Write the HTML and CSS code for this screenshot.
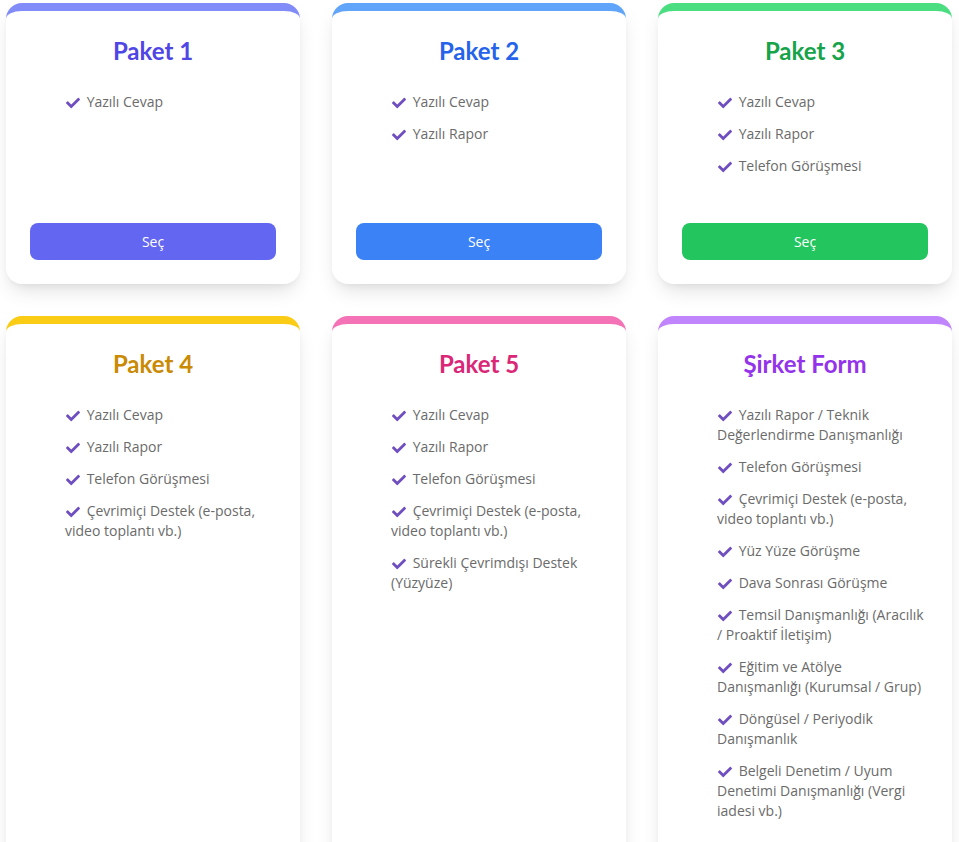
FILE: index.html
```html
<!DOCTYPE html>
<html lang="tr">
<head>
    <meta charset="UTF-8">
    <meta name="viewport" content="width=device-width, initial-scale=1.0">
    <title>Paketler</title>
    <link rel="stylesheet" href="styles.css">
</head>
<body>

    <div class="packages">

        <!-- Paket 1 -->
        <div class="card indigo">
            <h2>Paket 1</h2>
            <ul>
                <li><svg class="check" viewBox="0 0 512 512"><path d="M173.9 439.4l-166.4-166.4c-10-10-10-26.2 0-36.2l36.2-36.2c10-10 26.2-10 36.2 0L192 312.7 432.1 72.6c10-10 26.2-10 36.2 0l36.2 36.2c10 10 10 26.2 0 36.2l-294.4 294.4c-10 10-26.2 10-36.2 0z"/></svg> Yazılı Cevap</li>
            </ul>
            <button>Seç</button>
        </div>

        <!-- Paket 2 -->
        <div class="card blue">
            <h2>Paket 2</h2>
            <ul>
                <li><svg class="check" viewBox="0 0 512 512"><path d="M173.9 439.4l-166.4-166.4c-10-10-10-26.2 0-36.2l36.2-36.2c10-10 26.2-10 36.2 0L192 312.7 432.1 72.6c10-10 26.2-10 36.2 0l36.2 36.2c10 10 10 26.2 0 36.2l-294.4 294.4c-10 10-26.2 10-36.2 0z"/></svg> Yazılı Cevap</li>
                <li><svg class="check" viewBox="0 0 512 512"><path d="M173.9 439.4l-166.4-166.4c-10-10-10-26.2 0-36.2l36.2-36.2c10-10 26.2-10 36.2 0L192 312.7 432.1 72.6c10-10 26.2-10 36.2 0l36.2 36.2c10 10 10 26.2 0 36.2l-294.4 294.4c-10 10-26.2 10-36.2 0z"/></svg> Yazılı Rapor</li>
            </ul>
            <button>Seç</button>
        </div>

        <!-- Paket 3 -->
        <div class="card green">
            <h2>Paket 3</h2>
            <ul>
                <li><svg class="check" viewBox="0 0 512 512"><path d="M173.9 439.4l-166.4-166.4c-10-10-10-26.2 0-36.2l36.2-36.2c10-10 26.2-10 36.2 0L192 312.7 432.1 72.6c10-10 26.2-10 36.2 0l36.2 36.2c10 10 10 26.2 0 36.2l-294.4 294.4c-10 10-26.2 10-36.2 0z"/></svg> Yazılı Cevap</li>
                <li><svg class="check" viewBox="0 0 512 512"><path d="M173.9 439.4l-166.4-166.4c-10-10-10-26.2 0-36.2l36.2-36.2c10-10 26.2-10 36.2 0L192 312.7 432.1 72.6c10-10 26.2-10 36.2 0l36.2 36.2c10 10 10 26.2 0 36.2l-294.4 294.4c-10 10-26.2 10-36.2 0z"/></svg> Yazılı Rapor</li>
                <li><svg class="check" viewBox="0 0 512 512"><path d="M173.9 439.4l-166.4-166.4c-10-10-10-26.2 0-36.2l36.2-36.2c10-10 26.2-10 36.2 0L192 312.7 432.1 72.6c10-10 26.2-10 36.2 0l36.2 36.2c10 10 10 26.2 0 36.2l-294.4 294.4c-10 10-26.2 10-36.2 0z"/></svg> Telefon Görüşmesi</li>
            </ul>
            <button>Seç</button>
        </div>

        <!-- Paket 4 -->
        <div class="card yellow">
            <h2>Paket 4</h2>
            <ul>
                <li><svg class="check" viewBox="0 0 512 512"><path d="M173.9 439.4l-166.4-166.4c-10-10-10-26.2 0-36.2l36.2-36.2c10-10 26.2-10 36.2 0L192 312.7 432.1 72.6c10-10 26.2-10 36.2 0l36.2 36.2c10 10 10 26.2 0 36.2l-294.4 294.4c-10 10-26.2 10-36.2 0z"/></svg> Yazılı Cevap</li>
                <li><svg class="check" viewBox="0 0 512 512"><path d="M173.9 439.4l-166.4-166.4c-10-10-10-26.2 0-36.2l36.2-36.2c10-10 26.2-10 36.2 0L192 312.7 432.1 72.6c10-10 26.2-10 36.2 0l36.2 36.2c10 10 10 26.2 0 36.2l-294.4 294.4c-10 10-26.2 10-36.2 0z"/></svg> Yazılı Rapor</li>
                <li><svg class="check" viewBox="0 0 512 512"><path d="M173.9 439.4l-166.4-166.4c-10-10-10-26.2 0-36.2l36.2-36.2c10-10 26.2-10 36.2 0L192 312.7 432.1 72.6c10-10 26.2-10 36.2 0l36.2 36.2c10 10 10 26.2 0 36.2l-294.4 294.4c-10 10-26.2 10-36.2 0z"/></svg> Telefon Görüşmesi</li>
                <li><svg class="check" viewBox="0 0 512 512"><path d="M173.9 439.4l-166.4-166.4c-10-10-10-26.2 0-36.2l36.2-36.2c10-10 26.2-10 36.2 0L192 312.7 432.1 72.6c10-10 26.2-10 36.2 0l36.2 36.2c10 10 10 26.2 0 36.2l-294.4 294.4c-10 10-26.2 10-36.2 0z"/></svg> Çevrimiçi Destek (e-posta, video toplantı vb.)</li>
            </ul>
        </div>

        <!-- Paket 5 -->
        <div class="card pink">
            <h2>Paket 5</h2>
            <ul>
                <li><svg class="check" viewBox="0 0 512 512"><path d="M173.9 439.4l-166.4-166.4c-10-10-10-26.2 0-36.2l36.2-36.2c10-10 26.2-10 36.2 0L192 312.7 432.1 72.6c10-10 26.2-10 36.2 0l36.2 36.2c10 10 10 26.2 0 36.2l-294.4 294.4c-10 10-26.2 10-36.2 0z"/></svg> Yazılı Cevap</li>
                <li><svg class="check" viewBox="0 0 512 512"><path d="M173.9 439.4l-166.4-166.4c-10-10-10-26.2 0-36.2l36.2-36.2c10-10 26.2-10 36.2 0L192 312.7 432.1 72.6c10-10 26.2-10 36.2 0l36.2 36.2c10 10 10 26.2 0 36.2l-294.4 294.4c-10 10-26.2 10-36.2 0z"/></svg> Yazılı Rapor</li>
                <li><svg class="check" viewBox="0 0 512 512"><path d="M173.9 439.4l-166.4-166.4c-10-10-10-26.2 0-36.2l36.2-36.2c10-10 26.2-10 36.2 0L192 312.7 432.1 72.6c10-10 26.2-10 36.2 0l36.2 36.2c10 10 10 26.2 0 36.2l-294.4 294.4c-10 10-26.2 10-36.2 0z"/></svg> Telefon Görüşmesi</li>
                <li><svg class="check" viewBox="0 0 512 512"><path d="M173.9 439.4l-166.4-166.4c-10-10-10-26.2 0-36.2l36.2-36.2c10-10 26.2-10 36.2 0L192 312.7 432.1 72.6c10-10 26.2-10 36.2 0l36.2 36.2c10 10 10 26.2 0 36.2l-294.4 294.4c-10 10-26.2 10-36.2 0z"/></svg> Çevrimiçi Destek (e-posta, video toplantı vb.)</li>
                <li><svg class="check" viewBox="0 0 512 512"><path d="M173.9 439.4l-166.4-166.4c-10-10-10-26.2 0-36.2l36.2-36.2c10-10 26.2-10 36.2 0L192 312.7 432.1 72.6c10-10 26.2-10 36.2 0l36.2 36.2c10 10 10 26.2 0 36.2l-294.4 294.4c-10 10-26.2 10-36.2 0z"/></svg> Sürekli Çevrimdışı Destek (Yüzyüze)</li>
            </ul>
        </div>

        <!-- Şirket Form -->
        <div class="card purple">
            <h2>Şirket Form</h2>
            <ul>
                <li><svg class="check" viewBox="0 0 512 512"><path d="M173.9 439.4l-166.4-166.4c-10-10-10-26.2 0-36.2l36.2-36.2c10-10 26.2-10 36.2 0L192 312.7 432.1 72.6c10-10 26.2-10 36.2 0l36.2 36.2c10 10 10 26.2 0 36.2l-294.4 294.4c-10 10-26.2 10-36.2 0z"/></svg> Yazılı Rapor / Teknik Değerlendirme Danışmanlığı</li>
                <li><svg class="check" viewBox="0 0 512 512"><path d="M173.9 439.4l-166.4-166.4c-10-10-10-26.2 0-36.2l36.2-36.2c10-10 26.2-10 36.2 0L192 312.7 432.1 72.6c10-10 26.2-10 36.2 0l36.2 36.2c10 10 10 26.2 0 36.2l-294.4 294.4c-10 10-26.2 10-36.2 0z"/></svg> Telefon Görüşmesi</li>
                <li><svg class="check" viewBox="0 0 512 512"><path d="M173.9 439.4l-166.4-166.4c-10-10-10-26.2 0-36.2l36.2-36.2c10-10 26.2-10 36.2 0L192 312.7 432.1 72.6c10-10 26.2-10 36.2 0l36.2 36.2c10 10 10 26.2 0 36.2l-294.4 294.4c-10 10-26.2 10-36.2 0z"/></svg> Çevrimiçi Destek (e-posta, video toplantı vb.)</li>
                <li><svg class="check" viewBox="0 0 512 512"><path d="M173.9 439.4l-166.4-166.4c-10-10-10-26.2 0-36.2l36.2-36.2c10-10 26.2-10 36.2 0L192 312.7 432.1 72.6c10-10 26.2-10 36.2 0l36.2 36.2c10 10 10 26.2 0 36.2l-294.4 294.4c-10 10-26.2 10-36.2 0z"/></svg> Yüz Yüze Görüşme</li>
                <li><svg class="check" viewBox="0 0 512 512"><path d="M173.9 439.4l-166.4-166.4c-10-10-10-26.2 0-36.2l36.2-36.2c10-10 26.2-10 36.2 0L192 312.7 432.1 72.6c10-10 26.2-10 36.2 0l36.2 36.2c10 10 10 26.2 0 36.2l-294.4 294.4c-10 10-26.2 10-36.2 0z"/></svg> Dava Sonrası Görüşme</li>
                <li><svg class="check" viewBox="0 0 512 512"><path d="M173.9 439.4l-166.4-166.4c-10-10-10-26.2 0-36.2l36.2-36.2c10-10 26.2-10 36.2 0L192 312.7 432.1 72.6c10-10 26.2-10 36.2 0l36.2 36.2c10 10 10 26.2 0 36.2l-294.4 294.4c-10 10-26.2 10-36.2 0z"/></svg> Temsil Danışmanlığı (Aracılık / Proaktif İletişim)</li>
                <li><svg class="check" viewBox="0 0 512 512"><path d="M173.9 439.4l-166.4-166.4c-10-10-10-26.2 0-36.2l36.2-36.2c10-10 26.2-10 36.2 0L192 312.7 432.1 72.6c10-10 26.2-10 36.2 0l36.2 36.2c10 10 10 26.2 0 36.2l-294.4 294.4c-10 10-26.2 10-36.2 0z"/></svg> Eğitim ve Atölye Danışmanlığı (Kurumsal / Grup)</li>
                <li><svg class="check" viewBox="0 0 512 512"><path d="M173.9 439.4l-166.4-166.4c-10-10-10-26.2 0-36.2l36.2-36.2c10-10 26.2-10 36.2 0L192 312.7 432.1 72.6c10-10 26.2-10 36.2 0l36.2 36.2c10 10 10 26.2 0 36.2l-294.4 294.4c-10 10-26.2 10-36.2 0z"/></svg> Döngüsel / Periyodik Danışmanlık</li>
                <li><svg class="check" viewBox="0 0 512 512"><path d="M173.9 439.4l-166.4-166.4c-10-10-10-26.2 0-36.2l36.2-36.2c10-10 26.2-10 36.2 0L192 312.7 432.1 72.6c10-10 26.2-10 36.2 0l36.2 36.2c10 10 10 26.2 0 36.2l-294.4 294.4c-10 10-26.2 10-36.2 0z"/></svg> Belgeli Denetim / Uyum Denetimi Danışmanlığı (Vergi iadesi vb.)</li>
            </ul>
        </div>

    </div>

</body>
</html>
```

FILE: styles.css
```css
* {
    margin: 0;
    padding: 0;
    box-sizing: border-box;
}

body {
    background-color: #ffffff;
    font-family: 'Open Sans', sans-serif;
    color: #6b6b6b;
}

/* Grid of package cards */
.packages {
    display: grid;
    grid-template-columns: repeat(3, 294px);
    gap: 32px;
    padding: 3px 0 40px 6px;
}

.card {
    display: flex;
    flex-direction: column;
    background: #fff;
    border-top: 8px solid #818cf8;
    border-radius: 16px;
    padding: 24px;
    box-shadow: 0 10px 20px -4px rgba(0, 0, 0, 0.12), 0 4px 8px -4px rgba(0, 0, 0, 0.08);
}

h2 {
    font-family: 'Lato', sans-serif;
    font-weight: 700;
    font-size: 24px;
    line-height: 32px;
    text-align: center;
    margin-bottom: 25px;
}

ul {
    list-style: none;
    padding-left: 35px;
    margin-bottom: 47px;
}

li {
    font-size: 14px;
    line-height: 20px;
    margin-bottom: 12px;
}

li:last-child {
    margin-bottom: 0;
}

.check {
    width: 14px;
    height: 14px;
    fill: #6f4fc0;
    vertical-align: -3px;
    margin-left: 1px;
    margin-right: 3px;
}

button {
    margin-top: auto;
    width: 100%;
    height: 37px;
    border: none;
    border-radius: 8px;
    color: #fff;
    font-family: 'Open Sans', sans-serif;
    font-size: 14px;
    font-weight: 500;
    cursor: pointer;
}

/* Colour variants */
.indigo { border-top-color: #818cf8; }
.indigo h2 { color: #4f46e5; }
.indigo button { background: #6366f1; }

.blue { border-top-color: #60a5fa; }
.blue h2 { color: #2563eb; }
.blue button { background: #3b82f6; }

.green { border-top-color: #4ade80; }
.green h2 { color: #16a34a; }
.green button { background: #22c55e; }

.yellow { border-top-color: #facc15; }
.yellow h2 { color: #ca8a04; }

.pink { border-top-color: #f472b6; }
.pink h2 { color: #db2777; }

.purple { border-top-color: #c084fc; }
.purple h2 { color: #9333ea; }
```
